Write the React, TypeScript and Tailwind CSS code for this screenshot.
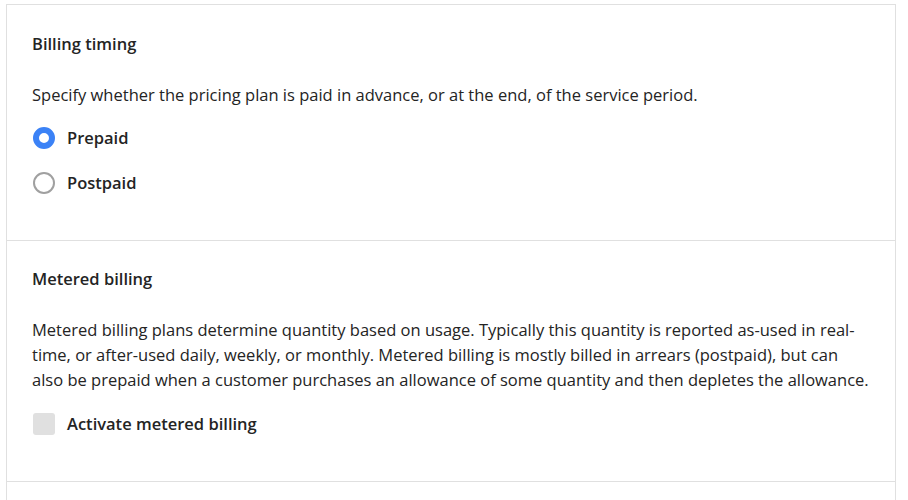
const Radio = ({ checked, label }: { checked?: boolean; label: string }) => (
  <label className="flex items-center h-6 gap-3">
    {checked ? (
      <span className="ml-px w-[22px] h-[22px] rounded-full border-[6px] border-[#3b82f6] bg-white" />
    ) : (
      <span className="ml-px w-[22px] h-[22px] rounded-full border-2 border-[#a0a0a0] bg-white" />
    )}
    <span className="font-semibold">{label}</span>
  </label>
);

export default function App() {
  return (
    <div
      className="bg-white pt-1 pl-[6px] pr-3 text-[#242424] text-[16.5px] leading-6"
      style={{ fontFamily: "'Open Sans', 'Liberation Sans', sans-serif" }}
    >
      <div className="border border-[#e0e0e0] border-b-0">
        <section className="border-b border-[#e0e0e0] px-[25px] pt-[27px] pb-[45px]">
          <h3 className="font-semibold">Billing timing</h3>
          <p className="mt-[27px]">
            Specify whether the pricing plan is paid in advance, or at the end, of the service period.
          </p>
          <div className="mt-[19px] flex flex-col gap-[21px]">
            <Radio checked label="Prepaid" />
            <Radio label="Postpaid" />
          </div>
        </section>
        <section className="border-b border-[#e0e0e0] px-[25px] pt-[26px] pb-[45px]">
          <h3 className="font-semibold">Metered billing</h3>
          <p className="mt-[26px] leading-[25px]">
            Metered billing plans determine quantity based on usage. Typically this quantity is reported as-used in
            real-time, or after-used daily, weekly, or monthly. Metered billing is mostly billed in arrears
            (postpaid), but can also be prepaid when a customer purchases an allowance of some quantity and then
            depletes the allowance.
          </p>
          <label className="mt-5 flex items-center h-6 gap-3">
            <span className="ml-px w-[22px] h-[22px] rounded-[3px] bg-[#e0e0e0]" />
            <span className="font-semibold">Activate metered billing</span>
          </label>
        </section>
        <div className="h-5" />
      </div>
    </div>
  );
}
